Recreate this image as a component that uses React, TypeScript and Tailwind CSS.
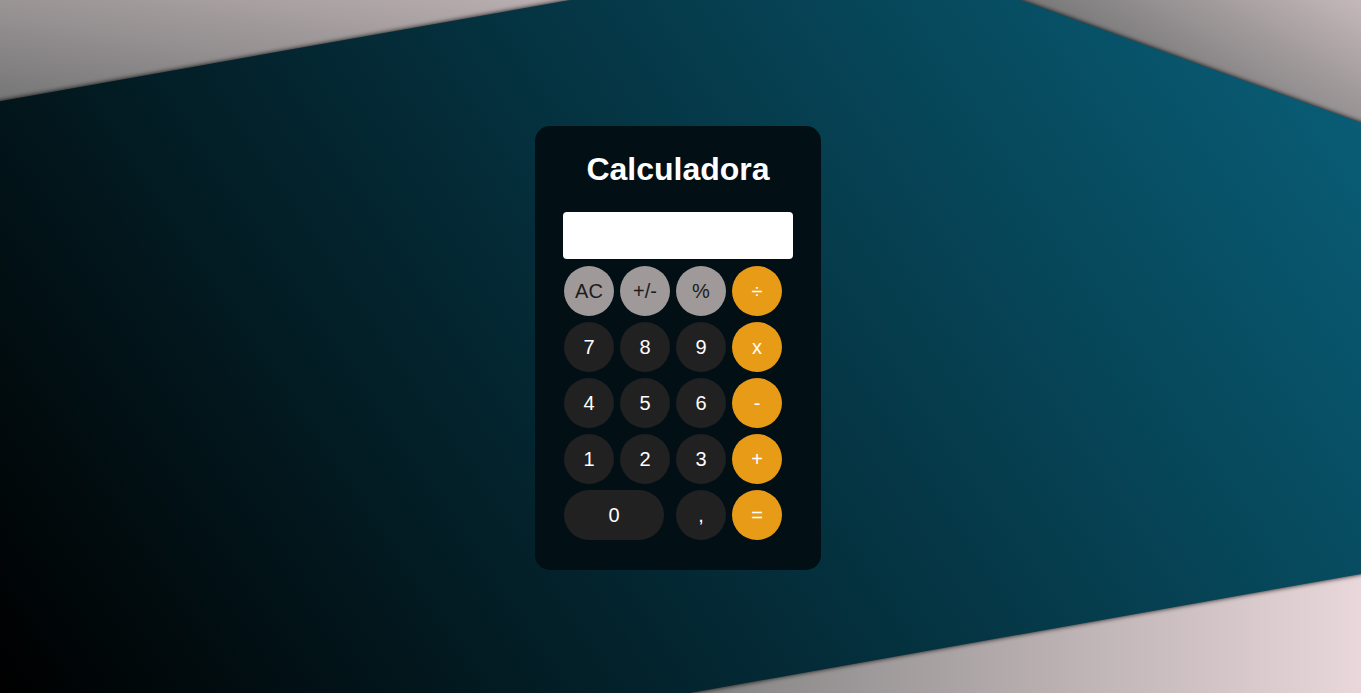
const keys = [
  { label: 'AC', kind: 'fn' },
  { label: '+/-', kind: 'fn' },
  { label: '%', kind: 'fn' },
  { label: '÷', kind: 'op' },
  { label: '7', kind: 'num' },
  { label: '8', kind: 'num' },
  { label: '9', kind: 'num' },
  { label: 'x', kind: 'op' },
  { label: '4', kind: 'num' },
  { label: '5', kind: 'num' },
  { label: '6', kind: 'num' },
  { label: '-', kind: 'op' },
  { label: '1', kind: 'num' },
  { label: '2', kind: 'num' },
  { label: '3', kind: 'num' },
  { label: '+', kind: 'op' },
  { label: '0', kind: 'zero' },
  { label: ',', kind: 'num' },
  { label: '=', kind: 'op' },
];

const styles: Record<string, string> = {
  fn: 'bg-[#9f9999] text-[#1c1c1c]',
  num: 'bg-[#212121] text-white',
  zero: 'bg-[#212121] text-white col-span-2 w-[100px]',
  op: 'bg-[#e89b16] text-white',
};

const bandPoints = '-50,110 872,-53.5 1420,144 1420,563.5 312,760 -50,760';

function Backdrop() {
  return (
    <svg
      className="absolute inset-0 w-full h-full"
      viewBox="0 0 1361 693"
      preserveAspectRatio="none"
    >
      <defs>
        <linearGradient id="tl" gradientUnits="userSpaceOnUse" x1="0" y1="101" x2="40" y2="-150">
          <stop offset="0" stopColor="#767676" />
          <stop offset="1" stopColor="#d2c3c6" />
        </linearGradient>
        <linearGradient id="tr" gradientUnits="userSpaceOnUse" x1="1020" y1="0" x2="1131" y2="-182">
          <stop offset="0" stopColor="#777777" />
          <stop offset="1" stopColor="#d4c5c8" />
        </linearGradient>
        <linearGradient id="bt" gradientUnits="userSpaceOnUse" x1="690" y1="693" x2="1361" y2="693">
          <stop offset="0" stopColor="#828282" />
          <stop offset="1" stopColor="#e9d7da" />
        </linearGradient>
        <linearGradient id="band" gradientUnits="userSpaceOnUse" x1="0" y1="693" x2="1250" y2="-150">
          <stop offset="0" stopColor="#000000" />
          <stop offset="1" stopColor="#09607a" />
        </linearGradient>
        <filter id="blur" x="-10%" y="-10%" width="120%" height="120%">
          <feGaussianBlur stdDeviation="2.5" />
        </filter>
      </defs>
      <rect x="0" y="0" width="872" height="350" fill="url(#tl)" />
      <rect x="872" y="0" width="489" height="350" fill="url(#tr)" />
      <rect x="0" y="350" width="1361" height="343" fill="url(#bt)" />
      <polygon points={bandPoints} fill="#000" fillOpacity="0.95" filter="url(#blur)" />
      <polygon points={bandPoints} fill="url(#band)" />
    </svg>
  );
}

export default function App() {
  return (
    <div className="relative h-screen w-full overflow-hidden font-['Liberation_Sans',Arial,sans-serif]">
      <Backdrop />
      <div className="relative flex h-full items-center justify-center">
        <div className="mr-[5px] mt-[3px] w-[286px] rounded-[15px] bg-[#020f14] px-[28px] pt-[25px] pb-[30px]">
          <h1 className="text-center text-[32px] font-bold leading-[36px] text-white">
            Calculadora
          </h1>
          <div className="mt-[25px] h-[47px] rounded-[4px] bg-white" />
          <div className="ml-px mt-[7px] grid grid-cols-[repeat(4,50px)] gap-[6px]">
            {keys.map((k) => (
              <button
                key={k.label}
                className={`flex h-[50px] w-[50px] items-center justify-center rounded-full text-[20px] ${styles[k.kind]}`}
              >
                {k.label}
              </button>
            ))}
          </div>
        </div>
      </div>
    </div>
  );
}
